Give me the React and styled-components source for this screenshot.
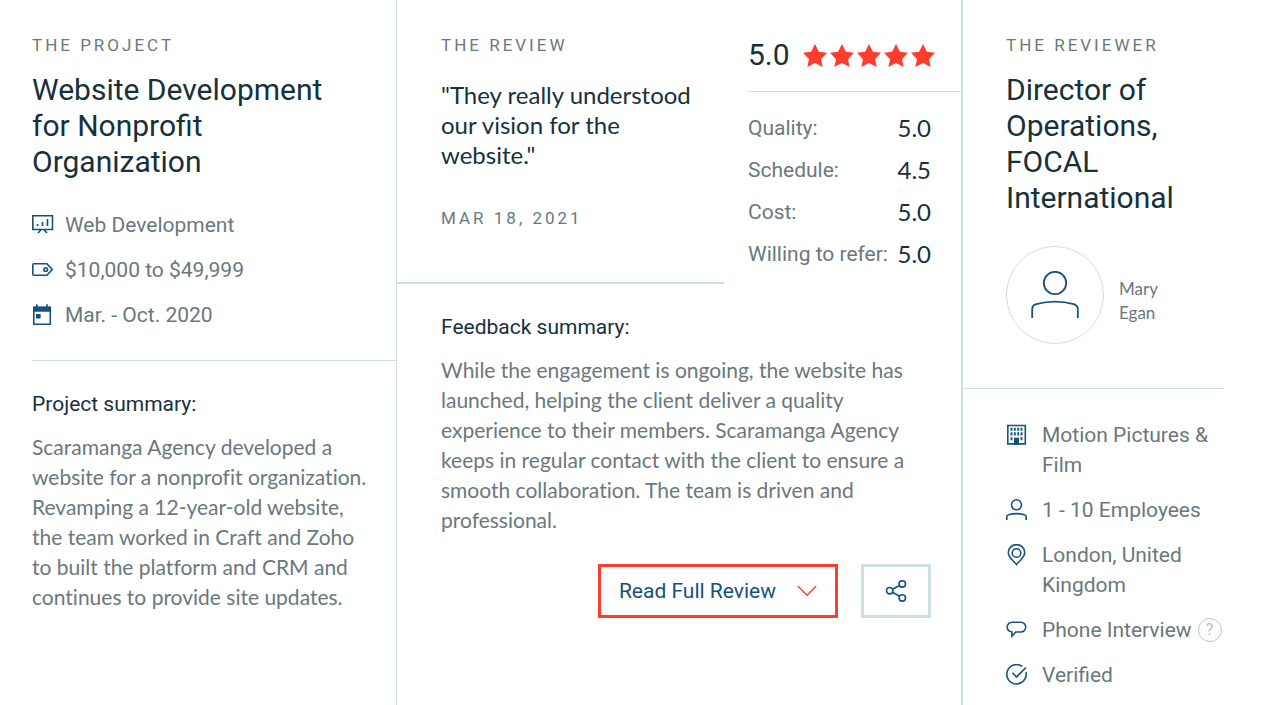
import styled, { createGlobalStyle } from "styled-components";

/* ===================== STYLES ===================== */

const GlobalStyle = createGlobalStyle`
  *, *::before, *::after {
    box-sizing: border-box;
  }

  body {
    margin: 0;
    background: #fff;
    color: #17313b;
    font-family: Roboto, "Liberation Sans", sans-serif;
  }

  h2, h3, p, ul, dl, dd, blockquote {
    margin: 0;
    padding: 0;
  }
`;

const Page = styled.main`
  min-height: 100vh;
  padding: 0 38px 0 32px;
  display: grid;
  grid-template-columns: minmax(0, 365fr) minmax(0, 566fr) minmax(0, 261fr);

  @media (max-width: 900px) {
    grid-template-columns: 1fr;
  }
`;

const Column = styled.section`
  border-right: ${({ $line }) => $line || 0}px solid #cde0e6;
`;

const Block = styled.div`
  padding: ${({ $pad }) => $pad};
  border-bottom: ${({ $line }) => $line || 0}px solid #cde0e6;
`;

const Label = styled.p`
  color: #6a787d;
  font-size: 17px;
  line-height: 24px;
  letter-spacing: 3px;
  text-transform: uppercase;
`;

const Title = styled.h2`
  margin-top: 15px;
  padding-right: 36px;
  font-size: 30px;
  font-weight: 400;
  line-height: 36px;
`;

const Quote = styled.blockquote`
  margin: 23px 0 36px;
  font-family: Lato, sans-serif;
  font-size: 24px;
  line-height: 30px;
`;

const Subtitle = styled.h3`
  font-size: 21px;
  font-weight: 400;
  line-height: 30px;
`;

const Text = styled.p`
  margin-top: 13px;
  color: #6a787d;
  font-family: Lato, sans-serif;
  font-size: 21px;
  font-variant-ligatures: no-common-ligatures;
  line-height: 30px;
`;

const List = styled.ul`
  margin-top: ${({ $top }) => $top || 0}px;
  display: flex;
  flex-direction: column;
  gap: 15px;
  list-style: none;
`;

const Item = styled.li`
  display: flex;
  gap: ${({ $gap }) => $gap}px;
  color: #6a787d;
  font-size: 21px;
  line-height: 30px;
`;

const Icon = styled.svg`
  flex: none;
  width: ${({ $size }) => $size || 22}px;
  height: ${({ $size }) => $size || 22}px;
  margin-top: ${({ $top }) => $top || 0}px;
  fill: none;
  stroke: #15527d;
  stroke-width: 1.6;
`;

const ReviewHead = styled.div`
  display: grid;
  grid-template-columns: minmax(0, 327fr) minmax(0, 213fr);
  gap: 24px;
`;

const Score = styled.div`
  display: flex;
  align-items: center;
  gap: 13px;
  padding: 37px 0 18px;
  border-bottom: 1px solid #cde0e6;
  font-size: 30px;
  line-height: 36px;
`;

const Stars = styled.div`
  display: flex;
  gap: 3px;
  margin-top: 2px;

  svg {
    width: 24px;
    height: 24px;
    fill: #ff3d2e;
  }
`;

const Metrics = styled.dl`
  padding: 21px 30px 0 0;
  display: flex;
  flex-direction: column;
  gap: 12px;

  div {
    display: flex;
    justify-content: space-between;
    line-height: 30px;
    white-space: nowrap;
  }

  dt {
    color: #6a787d;
    font-size: 21px;
  }

  dd {
    font-family: Lato, sans-serif;
    font-size: 24px;
  }
`;

const Actions = styled.div`
  margin-top: 29px;
  display: flex;
  justify-content: flex-end;
  gap: 23px;
`;

const Button = styled.button`
  height: 54px;
  padding: 0 ${({ $pad }) => $pad}px;
  display: flex;
  align-items: center;
  gap: 21px;
  background: #fff;
  border: 3px solid ${({ $color }) => $color};
  color: #15527d;
  font-family: inherit;
  font-size: 21px;
  cursor: pointer;
`;

const Person = styled.div`
  margin-top: 30px;
  display: flex;
  align-items: center;
  gap: 15px;
`;

const Avatar = styled.div`
  flex: none;
  width: 98px;
  height: 98px;
  display: flex;
  align-items: center;
  justify-content: center;
  border: 1px solid #cde0e6;
  border-radius: 50%;
`;

const Name = styled.p`
  max-width: 60px;
  padding-top: 12px;
  color: #6a787d;
  font-family: Lato, sans-serif;
  font-size: 17px;
  line-height: 24px;
`;

const WithHelp = styled.span`
  display: flex;
  align-items: center;
  gap: 6px;
  white-space: nowrap;
`;

const Help = styled.button`
  width: 24px;
  height: 24px;
  padding: 0;
  background: none;
  border: 1px solid #b6c6cb;
  border-radius: 50%;
  color: #b6c6cb;
  font-family: inherit;
  font-size: 16px;
  line-height: 22px;
  cursor: pointer;
`;

/* ===================== ICONS ===================== */

const icons = {
  board: (
    <path d="M.8 1.8h19.700v13.700H.8zM9.300 15.500 6 19M11.700 15.500 15 19M5.500 12v-2M10.500 12V8M15.500 12V5" />
  ),
  tag: (
    <>
      <path d="M1.800 4.700h13.100l5.400 5.800-5.400 5.800H1.800q-1 0-1-1V5.700q0-1 1-1z" />
      <circle cx="13.700" cy="10.500" r="1.800" />
    </>
  ),
  calendar: (
    <>
      <path d="M1.800 3.500h16.500v16.800H1.800z" />
      <path d="M1 2.500h18v5.300H1zM4 10h4.600v4.400H4zM4 .2h1.600v3H4zM14.200.2h1.600v3h-1.600z" fill="#15527d" stroke="none" />
    </>
  ),
  building: (
    <>
      <path d="M1.800 1.500h17.500v18.400H1.800z" />
      <path
        d="M5.500 3.700v3.100M8.800 3.700v3.100M12.200 3.700v3.100M15.500 3.700v3.100M5.500 8.300v3.100M8.800 8.300v3.100M12.200 8.300v3.100M15.500 8.300v3.100M5.500 13.200v3.100M15.500 13.200v3.100"
        strokeWidth="1.900"
      />
      <path d="M8 13.700h5v7H8z" fill="#15527d" stroke="none" />
    </>
  ),
  person: (
    <>
      <circle cx="10.500" cy="5.800" r="5" />
      <path d="M.8 21v-3.200q0-1.600 1.800-2 8-2.400 15.800 0 1.800.4 1.800 2V21" />
    </>
  ),
  pin: (
    <>
      <path d="M10.500 20.600C7.500 17 2.300 13.500 2.300 8.600a8.200 8 0 0 1 16.400 0c0 4.900-5.200 8.400-8.200 12z" />
      <circle cx="10.500" cy="9" r="4.300" />
    </>
  ),
  chat: (
    <path d="M6.300 3.200h8.500a4.900 4.900 0 0 1 0 9.800h-5L5.900 17.200V13C2.700 12.600 1.200 10.500 1.200 8.100a4.900 4.900 0 0 1 5.100-4.900z" />
  ),
  check: (
    <>
      <path d="M16.200 2.400A9.700 9.700 0 1 0 20 8.200" />
      <path d="M6.500 8.800 10.500 13 20 3.500" />
    </>
  ),
};

function RowIcon({ name }) {
  return (
    <Icon viewBox="0 0 22 22" $top={4} aria-hidden="true">
      {icons[name]}
    </Icon>
  );
}

/* ===================== COMPONENT ===================== */

export default function App() {
  const project = [
    { icon: "board", text: "Web Development" },
    { icon: "tag", text: "$10,000 to $49,999" },
    { icon: "calendar", text: "Mar. - Oct. 2020" },
  ];

  const metrics = [
    { name: "Quality:", value: "5.0" },
    { name: "Schedule:", value: "4.5" },
    { name: "Cost:", value: "5.0" },
    { name: "Willing to refer:", value: "5.0" },
  ];

  const reviewer = [
    { icon: "building", text: "Motion Pictures & Film" },
    { icon: "person", text: "1 - 10 Employees" },
    { icon: "pin", text: "London, United Kingdom" },
    { icon: "chat", text: "Phone Interview", help: true },
    { icon: "check", text: "Verified" },
  ];

  return (
    <>
      <GlobalStyle />
      <Page>
        <Column $line={1}>
          <Block $pad="33px 0 30px" $line={1}>
            <Label>The Project</Label>
            <Title>Website Development for Nonprofit Organization</Title>
            <List $top={30}>
              {project.map((p) => (
                <Item key={p.icon} $gap={11}>
                  <RowIcon name={p.icon} />
                  <span>{p.text}</span>
                </Item>
              ))}
            </List>
          </Block>
          <Block $pad="28px 28px 32px 0">
            <Subtitle>Project summary:</Subtitle>
            <Text>
              Scaramanga Agency developed a website for a nonprofit
              organization. Revamping a 12-year-old website, the team worked in
              Craft and Zoho to built the platform and CRM and continues to
              provide site updates.
            </Text>
          </Block>
        </Column>

        <Column $line={2}>
          <ReviewHead>
            <Block $pad="33px 24px 52px 44px" $line={2}>
              <Label>The Review</Label>
              <Quote>"They really understood our vision for the website."</Quote>
              <Label>Mar 18, 2021</Label>
            </Block>
            <div>
              <Score>
                <span>5.0</span>
                <Stars role="img" aria-label="5 out of 5 stars">
                  {[1, 2, 3, 4, 5].map((n) => (
                    <svg key={n} viewBox="0 0 24 24">
                      <path d="M12 0l3.900 7.700 8.100 1.100-6 6.400 1.700 7.900L12 19l-7.700 4.100L6 15.200 0 8.800l8.100-1.100z" />
                    </svg>
                  ))}
                </Stars>
              </Score>
              <Metrics>
                {metrics.map((m) => (
                  <div key={m.name}>
                    <dt>{m.name}</dt>
                    <dd>{m.value}</dd>
                  </div>
                ))}
              </Metrics>
            </div>
          </ReviewHead>
          <Block $pad="28px 30px 32px 44px">
            <Subtitle>Feedback summary:</Subtitle>
            <Text>
              While the engagement is ongoing, the website has launched, helping
              the client deliver a quality experience to their members.
              Scaramanga Agency keeps in regular contact with the client to
              ensure a smooth collaboration. The team is driven and
              professional.
            </Text>
            <Actions>
              <Button $pad={18} $color="#ff3d2e">
                Read Full Review
                <svg width="20" height="12" viewBox="0 0 20 12" fill="none" stroke="#ff3d2e" strokeWidth="1.300" aria-hidden="true">
                  <path d="M.8 1 10 10.300 19.200 1" />
                </svg>
              </Button>
              <Button $pad={21} $color="#cde0e6" aria-label="Share">
                <Icon viewBox="0 0 22 22" aria-hidden="true">
                  <circle cx="4.700" cy="10.700" r="3.200" />
                  <circle cx="17.300" cy="3.900" r="3.200" />
                  <circle cx="17.300" cy="17.900" r="3.200" />
                  <path d="M7.500 9.200 14.500 5.500M7.500 12.300l7 4" />
                </Icon>
              </Button>
            </Actions>
          </Block>
        </Column>

        <Column>
          <Block $pad="33px 0 44px 43px" $line={1}>
            <Label>The Reviewer</Label>
            <Title>Director of Operations, FOCAL International</Title>
            <Person>
              <Avatar>
                <Icon viewBox="0 0 48 48" $size={48} aria-hidden="true">
                  <circle cx="24" cy="12" r="11.200" strokeWidth="1.800" />
                  <path d="M1.200 47V38q0-3.600 4-4.900 18.800-5 37.600 0 4 1.300 4 4.900v9" strokeWidth="1.800" />
                </Icon>
              </Avatar>
              <Name>Mary Egan</Name>
            </Person>
          </Block>
          <Block $pad="31px 0 15px 43px">
            <List>
              {reviewer.map((r) => (
                <Item key={r.icon} $gap={14}>
                  <RowIcon name={r.icon} />
                  {r.help ? (
                    <WithHelp>
                      {r.text}
                      <Help aria-label="About phone interviews">?</Help>
                    </WithHelp>
                  ) : (
                    <span>{r.text}</span>
                  )}
                </Item>
              ))}
            </List>
          </Block>
        </Column>
      </Page>
    </>
  );
}
